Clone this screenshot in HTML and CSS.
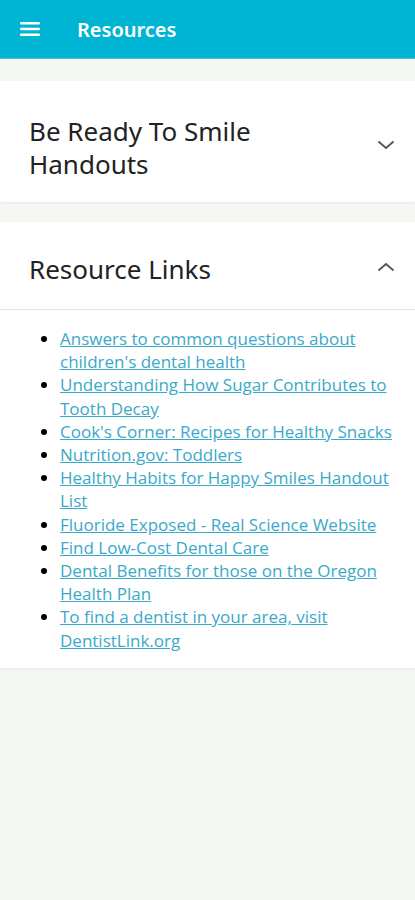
FILE: index.html
```html
<!DOCTYPE html>
<html lang="en">
<head>
  <meta charset="UTF-8">
  <title>Resources</title>
  <link rel="stylesheet" href="styles.css">
</head>
<body>
  <header class="topbar">
    <svg class="menu-icon" width="20" height="14" viewBox="0 0 20 14">
      <rect x="0" y="0" width="20" height="2.4" rx="1" fill="#fff"/>
      <rect x="0" y="5.8" width="20" height="2.4" rx="1" fill="#fff"/>
      <rect x="0" y="11.6" width="20" height="2.4" rx="1" fill="#fff"/>
    </svg>
    <h1 class="title">Resources</h1>
  </header>

  <main class="content">
    <section class="panel">
      <div class="panel-head">
        <h2>Be Ready To Smile Handouts</h2>
        <svg class="chevron" width="18" height="10" viewBox="0 0 18 10">
          <path d="M1.5 1.5 L9 8 L16.5 1.5" fill="none" stroke="#555" stroke-width="1.8"/>
        </svg>
      </div>
    </section>

    <section class="panel open">
      <div class="panel-head">
        <h2>Resource Links</h2>
        <svg class="chevron" width="18" height="10" viewBox="0 0 18 10">
          <path d="M1.5 8.5 L9 2 L16.5 8.5" fill="none" stroke="#555" stroke-width="1.8"/>
        </svg>
      </div>
      <div class="panel-body">
        <ul class="links">
          <li><a href="#">Answers to common questions about children's dental health</a></li>
          <li><a href="#">Understanding How Sugar Contributes to Tooth Decay</a></li>
          <li><a href="#">Cook's Corner: Recipes for Healthy Snacks</a></li>
          <li><a href="#">Nutrition.gov: Toddlers</a></li>
          <li><a href="#">Healthy Habits for Happy Smiles Handout List</a></li>
          <li><a href="#">Fluoride Exposed - Real Science Website</a></li>
          <li><a href="#">Find Low-Cost Dental Care</a></li>
          <li><a href="#">Dental Benefits for those on the Oregon Health Plan</a></li>
          <li><a href="#">To find a dentist in your area, visit DentistLink.org</a></li>
        </ul>
      </div>
    </section>
  </main>
</body>
</html>
```

FILE: styles.css
```css
body {
  margin: 0;
  font-family: "Open Sans", "Noto Sans", sans-serif;
  background: #f5f7f3;
  min-height: 900px;
}
.topbar {
  height: 58px;
  background: #00b4d4;
  display: flex;
  align-items: center;
  padding-left: 20px;
  border-bottom: 1px solid #3fc3dc;
}
.menu-icon {
  display: block;
}
.title {
  margin: 0 0 0 37px;
  color: #fff;
  font-family: "Noto Sans", "Open Sans", sans-serif;
  font-size: 20px;
  font-weight: 600;
}
.content {
  padding-top: 22px;
}
.panel {
  background: #fff;
  margin-bottom: 20px;
  box-shadow: 0 1px 3px rgba(0, 0, 0, 0.06);
}
.panel-head {
  display: flex;
  align-items: center;
  justify-content: space-between;
  padding: 34px 20px 21px 29px;
}
.panel.open .panel-head {
  padding: 31px 20px 23px 29px;
  border-bottom: 1px solid #e4e4e4;
}
.panel-head h2 {
  margin: 0;
  font-family: "Noto Sans", "Open Sans", sans-serif;
  font-weight: 400;
  font-size: 26px;
  line-height: 33px;
  color: #222;
  max-width: 270px;
}
.chevron {
  display: block;
  margin-top: -6px;
}
.panel-body {
  padding: 17px 14px 16px 0;
}
.links {
  margin: 0;
  padding-left: 60px;
}
.links li {
  font-size: 17px;
  line-height: 23.2px;
  color: #000;
}
.links a {
  color: #3aa9c9;
  text-decoration: underline;
}
```
